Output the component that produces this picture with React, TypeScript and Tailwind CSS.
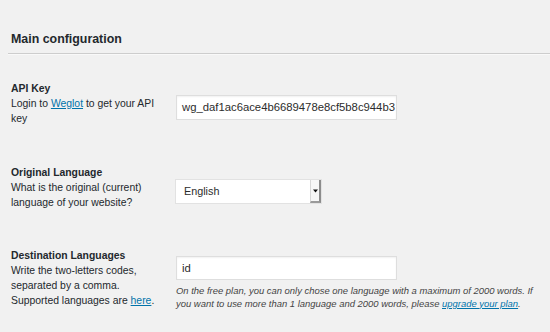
import React from "react";

export default function App() {
  return (
    <div
      className="w-[550px] h-[332px] overflow-hidden bg-[#f1f1f1] text-[#23282d]"
      style={{ fontFamily: '"Liberation Sans", Arial, sans-serif' }}
    >
      <h2 className="pl-[11px] pt-[31px] text-[12.4px] leading-[16px] font-bold">
        Main configuration
      </h2>
      <div className="ml-[8px] mt-[6px]">
        <div className="h-px bg-[#cdcdcd]" />
        <div className="h-px bg-[#f9f9f9]" />
      </div>

      <div className="pl-[11px]">
        {/* API Key */}
        <div className="flex items-start mt-[25.5px]">
          <div className="w-[165px] shrink-0 text-[10.4px] leading-[15px]">
            <div className="w-[146px]">
              <div className="font-bold">API Key</div>
              <div>
                Login to{" "}
                <a className="text-[#0073aa] underline" href="#">
                  Weglot
                </a>{" "}
                to get your API key
              </div>
            </div>
          </div>
          <div className="pt-[14.5px]">
            <div className="w-[221px] h-[25px] bg-white border border-[#dedede] shadow-[inset_0_1px_2px_rgba(0,0,0,0.06)] flex items-center pl-[5px] overflow-hidden whitespace-nowrap text-[11.3px] text-[#2c2c2c]">
              wg_daf1ac6ace4b6689478e8cf5b8c944b3
            </div>
          </div>
        </div>

        {/* Original Language */}
        <div className="flex items-start mt-[39px]">
          <div className="w-[164px] shrink-0 text-[10.4px] leading-[15px]">
            <div className="w-[146px]">
              <div className="font-bold">Original Language</div>
              <div>
                What is the original (current) language of your website?
              </div>
            </div>
          </div>
          <div className="pt-[14.5px]">
            <div className="w-[147px] h-[25px] bg-white border border-[#e2e2e2] flex">
              <div className="flex-1 flex items-center pl-[8px] text-[10.8px] text-[#2c2c2c]">
                English
              </div>
              <div className="w-[11px] h-full flex items-center justify-center border-l border-[#d8d8d8] border-r-[2px] border-r-[#8c8c8c] border-b-[2px] border-b-[#9a9a9a] bg-[#f7f7f7]">
                <svg width="5" height="4" viewBox="0 0 5 4">
                  <path d="M0 0.5 L5 0.5 L2.5 3.5 Z" fill="#111" />
                </svg>
              </div>
            </div>
          </div>
        </div>

        {/* Destination Languages */}
        <div className="flex items-start mt-[38.5px]">
          <div className="w-[165px] shrink-0 text-[10.4px] leading-[15px]">
            <div className="w-[146px]">
              <div className="font-bold">Destination Languages</div>
              <div>
                Write the two-letters codes, separated by a comma. Supported
                languages are{" "}
                <a className="text-[#0073aa] underline" href="#">
                  here
                </a>
                .
              </div>
            </div>
          </div>
          <div className="pt-[8px]">
            <div className="w-[221px] h-[24px] bg-white border border-[#dedede] shadow-[inset_0_1px_2px_rgba(0,0,0,0.06)] flex items-center pl-[5px] text-[11.3px] text-[#2c2c2c]">
              id
            </div>
            <p className="mt-[5px] w-[370px] italic text-[9.45px] leading-[12.5px] text-[#444]">
              On the free plan, you can only chose one language with a maximum
              of 2000 words. If you want to use more than 1 language and 2000
              words, please{" "}
              <a className="text-[#0073aa] underline" href="#">
                upgrade your plan
              </a>
              .
            </p>
          </div>
        </div>
      </div>
    </div>
  );
}
